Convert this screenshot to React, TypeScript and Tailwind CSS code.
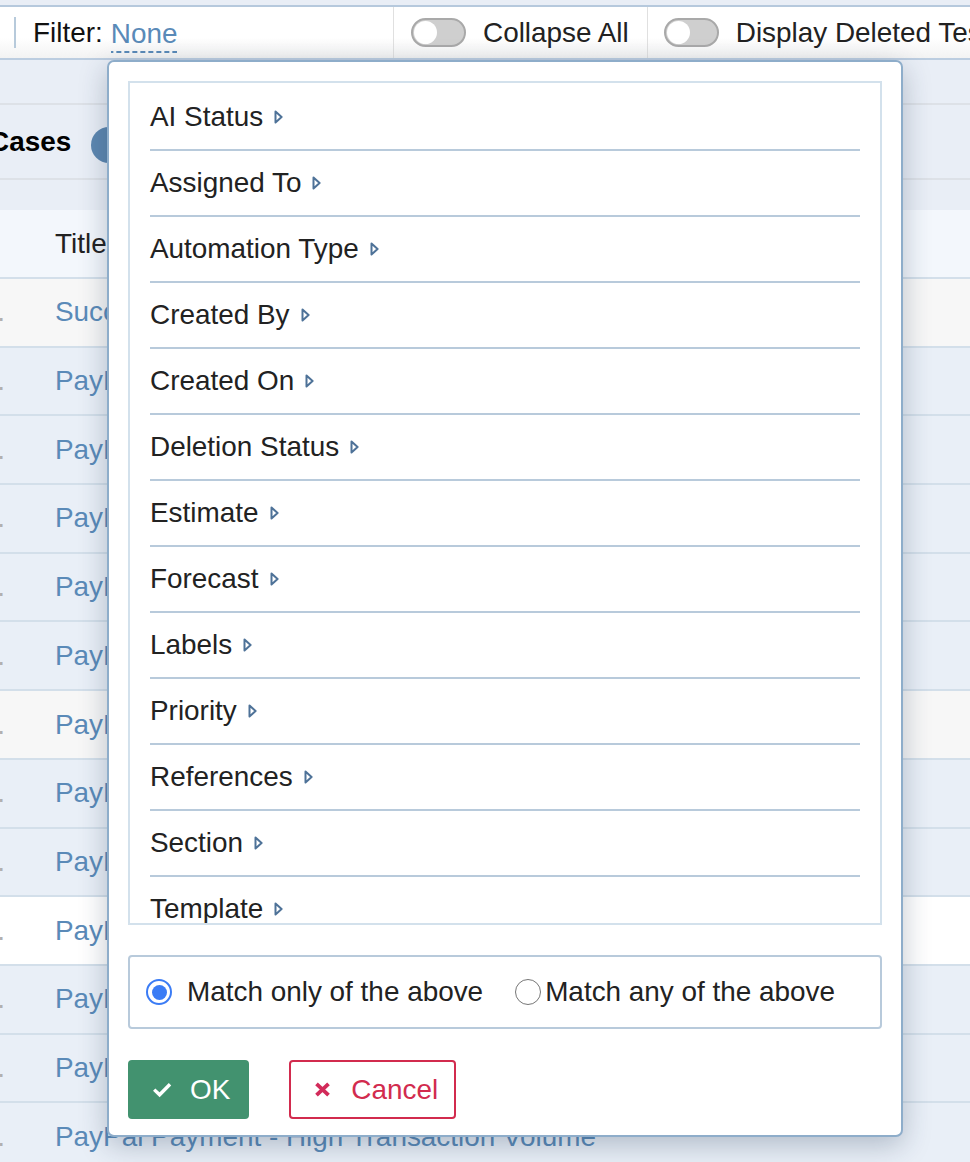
import React from 'react';

const FILTERS = [
  'AI Status',
  'Assigned To',
  'Automation Type',
  'Created By',
  'Created On',
  'Deletion Status',
  'Estimate',
  'Forecast',
  'Labels',
  'Priority',
  'References',
  'Section',
  'Template',
  'Type',
  'Updated By',
  'Updated On',
];

const ROWS = [
  { id: 'C1', title: 'Successful Payment Transaction', bg: 'bg-[#f7f7f7]' },
  { id: 'C2', title: 'PayPal Payment - Invalid Credentials', bg: 'bg-[#e9eff7]' },
  { id: 'C3', title: 'PayPal Payment - Insufficient Funds', bg: 'bg-[#e9eff7]' },
  { id: 'C4', title: 'PayPal Payment - Expired Session', bg: 'bg-[#e9eff7]' },
  { id: 'C5', title: 'PayPal Payment - Currency Conversion', bg: 'bg-[#e9eff7]' },
  { id: 'C6', title: 'PayPal Payment - Refund Request', bg: 'bg-[#e9eff7]' },
  { id: 'C7', title: 'PayPal Payment - Partial Refund', bg: 'bg-[#f7f7f7]' },
  { id: 'C8', title: 'PayPal Payment - Cancelled by User', bg: 'bg-[#e9eff7]' },
  { id: 'C9', title: 'PayPal Payment - Network Timeout', bg: 'bg-[#e9eff7]' },
  { id: 'C10', title: 'PayPal Payment - Duplicate Transaction', bg: 'bg-white' },
  { id: 'C11', title: 'PayPal Payment - Guest Checkout', bg: 'bg-[#e9eff7]' },
  { id: 'C12', title: 'PayPal Payment - Mobile Checkout', bg: 'bg-[#e9eff7]' },
  { id: 'C13', title: 'PayPal Payment - High Transaction Volume', bg: 'bg-[#e9eff7]' },
];

function Caret() {
  return (
    <svg width="9" height="14" viewBox="0 0 9 14" className="ml-[11px] shrink-0">
      <path
        d="M1.5 1.5 L7.6 7 L1.5 12.5 Z"
        fill="none"
        stroke="#4e7298"
        strokeWidth="2"
        strokeLinejoin="round"
      />
    </svg>
  );
}

function Toggle() {
  return (
    <span className="w-[55px] h-[29px] shrink-0 rounded-full bg-[#cfcfcf] border-2 border-[#a9a9a9] flex items-center pl-[1px]">
      <span className="w-[23px] h-[23px] rounded-full bg-white" />
    </span>
  );
}

export default function App() {
  return (
    <div className="relative w-[970px] h-[1162px] overflow-hidden bg-[#e9eef6] font-['Liberation_Sans',Arial,sans-serif] text-[27.9px] leading-none text-[#222]">
      {/* top strip */}
      <div className="h-[7px] border-b-2 border-[#b6c9dd]" />

      {/* toolbar */}
      <div className="h-[53px] flex bg-linear-to-b from-white from-60% to-[#f3f3f3] border-b-2 border-[#bccde0] whitespace-nowrap">
        <div className="w-[393px] shrink-0 flex items-center pl-[14px]">
          <span className="w-[2px] h-[31px] bg-[#b7cadb]" />
          <span className="ml-[17px] text-[#111]">Filter:</span>
          <span className="ml-[8px] pb-[6px] text-[#5a8ab8] bg-[linear-gradient(to_right,#5a8ab8_65%,transparent_0)] bg-[length:8px_2px] bg-repeat-x bg-bottom translate-y-[4px]">
            None
          </span>
        </div>
        <div className="flex items-center border-l border-[#e0e0e0] pl-[17px] pr-[18px]">
          <Toggle />
          <span className="ml-[17px]">Collapse All</span>
        </div>
        <div className="flex items-center border-l border-[#e0e0e0] pl-[16px]">
          <Toggle />
          <span className="ml-[17px]">Display Deleted Test Cases</span>
        </div>
      </div>

      {/* background table */}
      <div className="whitespace-nowrap">
        <div className="h-[45px] border-b-2 border-[#dde1e7]" />
        <div className="h-[75px] border-b-2 border-[#dde1e7] flex items-center">
          <span className="-ml-[74px] font-bold text-black">Test Cases</span>
          <span className="ml-[20px] mt-[6px] w-[36px] h-[36px] rounded-full bg-[#5d87b0]" />
        </div>
        <div className="h-[30px]" />
        <div className="h-[69px] border-b-2 border-[#d3dfea] bg-[#f3f7fc] flex items-center pl-[55px]">
          Title
        </div>
        {ROWS.map((r) => (
          <div
            key={r.id}
            className={`h-[68.7px] border-b-2 border-[#d3dfea] flex items-center ${r.bg}`}
          >
            <span className="-ml-[50px] w-[55px] shrink-0 text-right text-[#b0b0b0]">.</span>
            <span className="ml-[50px] text-[#5a8ab8]">{r.title}</span>
          </div>
        ))}
      </div>

      {/* filter dropdown */}
      <div className="absolute left-[107px] top-[60px] z-10 w-[796px] bg-white border-2 border-[#8eadca] rounded-[7px] pt-[19px] px-[19px] pb-[16px] shadow-[0_8px_28px_rgba(30,50,80,0.28)]">
        <div className="h-[844px] overflow-hidden border-2 border-[#d3e1ec] px-[20px] pt-[2px]">
          {FILTERS.map((f) => (
            <div
              key={f}
              className="h-[66px] border-b-2 border-[#b8cadb] flex items-center whitespace-nowrap"
            >
              <span>{f}</span>
              <Caret />
            </div>
          ))}
        </div>

        <div className="mt-[30px] h-[74px] border-2 border-[#b8cadb] rounded-[4px] flex items-center pl-[16px] whitespace-nowrap">
          <span className="w-[26px] h-[26px] shrink-0 rounded-full border-[2.5px] border-[#3b7cf5] flex items-center justify-center">
            <span className="w-[15px] h-[15px] rounded-full bg-[#3b7cf5]" />
          </span>
          <span className="ml-[15px]">Match only of the above</span>
          <span className="ml-[32px] w-[26px] h-[26px] shrink-0 rounded-full border-[1.5px] border-[#767676]" />
          <span className="ml-[4px]">Match any of the above</span>
        </div>

        <div className="mt-[31px] flex">
          <button className="h-[59px] flex items-center pl-[24px] pr-[19px] bg-[#42926f] rounded-[4px] text-white">
            <svg width="20" height="17" viewBox="0 0 20 17">
              <path d="M2.2 8.6 L7.6 13.8 L18 3.2" fill="none" stroke="white" strokeWidth="3.4" />
            </svg>
            <span className="ml-[18px]">OK</span>
          </button>
          <button className="ml-[40px] h-[59px] flex items-center pl-[23px] pr-[16px] border-2 border-[#d22b4e] rounded-[4px] text-[#d22b4e]">
            <svg width="17" height="15" viewBox="0 0 17 15">
              <path d="M2.5 1.8 L14.5 13.2 M14.5 1.8 L2.5 13.2" fill="none" stroke="#d22b5a" strokeWidth="3.8" />
            </svg>
            <span className="ml-[20px]">Cancel</span>
          </button>
        </div>
      </div>
    </div>
  );
}
